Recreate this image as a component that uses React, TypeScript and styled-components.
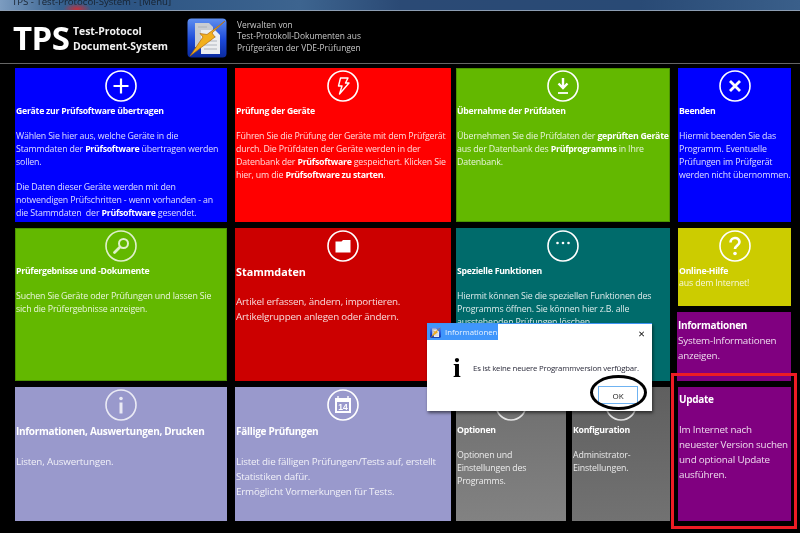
import React from 'react';
import styled, {createGlobalStyle} from "styled-components";

const GlobalStyle = createGlobalStyle`
    html, body {
        margin: 0;
        padding: 0;
        background: #000;
    }
    body {
        width: 800px;
        height: 533px;
        overflow: hidden;
        font-family: "Open Sans", "Noto Sans", "Liberation Sans", sans-serif;
    }
`

const Ring: React.FC<{ children: React.ReactNode, faint?: boolean }> = ({children, faint}) => (
    <svg width="32" height="32" viewBox="0 0 32 32" fill="none" stroke="#fff" opacity={faint ? 0.8 : 1}>
        <circle cx="16" cy="16" r="15" strokeWidth="1.6"/>
        {children}
    </svg>
)

const icons: Record<string, React.ReactNode> = {
    plus: <Ring><path d="M16 8.5v15M8.5 16h15" strokeWidth="2.2"/></Ring>,
    bolt: <Ring><path d="M13.5 8h7.500l-2.500 5h3.500l-9.500 11 2.500-8h-3.500z" strokeWidth="1.4" strokeLinejoin="round"/></Ring>,
    download: <Ring><path d="M16 8v10M11.500 13.500l4.500 4.500 4.500-4.500" strokeWidth="2.4"/><path d="M11 23h10" strokeWidth="1.8"/></Ring>,
    close: <Ring><path d="M11 11l10 10M21 11l-10 10" strokeWidth="2.8"/></Ring>,
    search: <Ring faint><circle cx="18.5" cy="13.5" r="4.5" strokeWidth="2"/><path d="M15 17l-5.500 5.500" strokeWidth="2.8" strokeLinecap="round"/></Ring>,
    folder: <Ring><path d="M8.500 11.500h6l1.500-1.500h7.500v12.500h-15z" fill="#fff" stroke="none"/></Ring>,
    dots: <Ring><g fill="#fff" stroke="none"><circle cx="10.5" cy="13" r="1.3"/><circle cx="16" cy="13" r="1.3"/><circle cx="21.5" cy="13" r="1.3"/></g></Ring>,
    help: <Ring><path d="M11.500 12.500c0-6 9-6 9-.5 0 3.500-4.500 3.500-4.500 7" strokeWidth="2.6"/><circle cx="16" cy="23.5" r="1.8" fill="#fff" stroke="none"/></Ring>,
    info: <Ring faint><circle cx="16" cy="9.5" r="1.8" fill="#fff" stroke="none"/><path d="M16 13.500v11" strokeWidth="3"/></Ring>,
    calendar: (
        <Ring>
            <path d="M8 9h16v15H8z" fill="#fff" stroke="none"/>
            <path d="M10 13h12v9H10z" fill="#9999cc" stroke="none"/>
            <path d="M11 7v3M21 7v3" strokeWidth="1.4"/>
            <text x="16" y="21" fontSize="8.5" fontWeight="700" fill="#fff" stroke="none" textAnchor="middle"
                  fontFamily="Liberation Sans, sans-serif">14</text>
        </Ring>
    ),
    gear: <Ring faint><circle cx="16" cy="16" r="5" strokeWidth="1.6"/></Ring>,
}

const AppLogo: React.FC<{ size: number }> = ({size}) => (
    <svg width={size} height={size} viewBox="0 0 40 40" style={{flex: "none"}}>
        <defs>
            <linearGradient id="logoBg" x1="0" y1="0" x2="0" y2="1">
                <stop offset="0" stopColor="#5f8ff0"/>
                <stop offset="0.55" stopColor="#1c49d8"/>
                <stop offset="1" stopColor="#0a2a9e"/>
            </linearGradient>
        </defs>
        <rect x="0.5" y="0.5" width="39" height="39" rx="4" fill="url(#logoBg)"/>
        <path d="M8 5h14l4 4v20H8z" fill="#c9ccd2"/>
        <path d="M14 12h14l5 5v19H14z" fill="#eceef0"/>
        <path d="M17 19h12M17 23h13M17 27h13M17 31h13M11 9h9" stroke="#a9adb5" strokeWidth="0.9"/>
        <path d="M38 3L25 15l3 4L3 38l13-19-3-3.500 7 1z" fill="#f2b01e" stroke="#b06a10" strokeWidth="0.7"/>
    </svg>
)

const rows = {
    top: "1",
    middle: "3",
    bottom: "5",
}

const columns = {
    first: "1",
    second: "3",
    third: "5",
    fourth: "7",
}

export default function App() {
    return (
        <Screen>
            <GlobalStyle/>
            <TitleBar>
                <TitleIcon><AppLogo size={8}/></TitleIcon>
                <TitleText>TPS - Test-Protocol-System - [Menü]</TitleText>
            </TitleBar>

            <Header>
                <Brand>TPS</Brand>
                <BrandName>Test-Protocol<br/>Document-System</BrandName>
                <HeaderLogo><AppLogo size={40}/></HeaderLogo>
                <HeaderNote>
                    Verwalten von<br/>
                    Test-Protokoll-Dokumenten aus<br/>
                    Prüfgeräten der VDE-Prüfungen
                </HeaderNote>
            </Header>

            <Board>
                <Tile $bg="#0000ff" $col={columns.first} $row={rows.top}>
                    <IconSlot>{icons.plus}</IconSlot>
                    <TileTitle>Geräte zur Prüfsoftware übertragen</TileTitle>
                    <TileBody>
                        Wählen Sie hier aus, welche Geräte in die<br/>
                        Stammdaten der <b>Prüfsoftware</b> übertragen werden<br/>
                        sollen.<br/><br/>
                        Die Daten dieser Geräte werden mit den<br/>
                        notwendigen Prüfschritten - wenn vorhanden - an<br/>
                        die Stammdaten&nbsp; der <b>Prüfsoftware</b> gesendet.
                    </TileBody>
                </Tile>
                <Tile $bg="#ff0000" $col={columns.second} $row={rows.top}>
                    <IconSlot>{icons.bolt}</IconSlot>
                    <TileTitle>Prüfung der Geräte</TileTitle>
                    <TileBody>
                        Führen Sie die Prüfung der Geräte mit dem Prüfgerät<br/>
                        durch. Die Prüfdaten der Geräte werden in der<br/>
                        Datenbank der <b>Prüfsoftware</b> gespeichert. Klicken Sie<br/>
                        hier, um die <b>Prüfsoftware zu starten</b>.
                    </TileBody>
                </Tile>
                <Tile $bg="#63b800" $edge="#4c9400" $col={columns.third} $row={rows.top}>
                    <IconSlot>{icons.download}</IconSlot>
                    <TileTitle>Übernahme der Prüfdaten</TileTitle>
                    <TileBody>
                        Übernehmen Sie die Prüfdaten der <b>geprüften Geräte</b><br/>
                        aus der Datenbank des <b>Prüfprogramms</b> in Ihre<br/>
                        Datenbank.
                    </TileBody>
                </Tile>
                <Tile $bg="#0000ff" $col={columns.fourth} $row={rows.top}>
                    <IconSlot>{icons.close}</IconSlot>
                    <TileTitle>Beenden</TileTitle>
                    <TileBody>
                        Hiermit beenden Sie das<br/>
                        Programm. Eventuelle<br/>
                        Prüfungen im Prüfgerät<br/>
                        werden nicht übernommen.
                    </TileBody>
                </Tile>

                <Tile $bg="#63b800" $edge="#4c9400" $col={columns.first} $row={rows.middle}>
                    <IconSlot>{icons.search}</IconSlot>
                    <TileTitle>Prüfergebnisse und -Dokumente</TileTitle>
                    <TileBody>
                        Suchen Sie Geräte oder Prüfungen und lassen Sie<br/>
                        sich die Prüfergebnisse anzeigen.
                    </TileBody>
                </Tile>
                <Tile $bg="#cc0000" $col={columns.second} $row={rows.middle}>
                    <IconSlot>{icons.folder}</IconSlot>
                    <HeroTitle $large>Stammdaten</HeroTitle>
                    <TileBody $large>
                        Artikel erfassen, ändern, importieren.<br/>
                        Artikelgruppen anlegen oder ändern.
                    </TileBody>
                </Tile>
                <Tile $bg="#006b6b" $col={columns.third} $row={rows.middle}>
                    <IconSlot>{icons.dots}</IconSlot>
                    <TileTitle>Spezielle Funktionen</TileTitle>
                    <TileBody>
                        Hiermit können Sie die speziellen Funktionen des<br/>
                        Programms öffnen. Sie können hier z.B. alle<br/>
                        ausstehenden Prüfungen löschen.
                    </TileBody>
                </Tile>
                <SideStack>
                    <SideTile $bg="#cccc00" $grow={80}>
                        <IconSlot>{icons.help}</IconSlot>
                        <TileTitle>Online-Hilfe</TileTitle>
                        <TileBody $tight>aus dem Internet!</TileBody>
                    </SideTile>
                    <InfoTile $bg="#800080" $grow={67}>
                        <TileTitle $large>Informationen</TileTitle>
                        <TileBody $large $tight>System-Informationen<br/>anzeigen.</TileBody>
                    </InfoTile>
                </SideStack>

                <Tile $bg="#9999cc" $col={columns.first} $row={rows.bottom}>
                    <IconSlot>{icons.info}</IconSlot>
                    <TileTitle $large>Informationen, Auswertungen, Drucken</TileTitle>
                    <TileBody $large>Listen, Auswertungen.</TileBody>
                </Tile>
                <Tile $bg="#9999cc" $col={columns.second} $row={rows.bottom}>
                    <IconSlot>{icons.calendar}</IconSlot>
                    <TileTitle $large>Fällige Prüfungen</TileTitle>
                    <TileBody $large>
                        Listet die fälligen Prüfungen/Tests auf, erstellt<br/>
                        Statistiken dafür.<br/>
                        Ermöglicht Vormerkungen für Tests.
                    </TileBody>
                </Tile>
                <SplitCell>
                    <GrayTile $from="#6e6e6e" $to="#828282">
                        <IconSlot>{icons.gear}</IconSlot>
                        <TileTitle>Optionen</TileTitle>
                        <TileBody>
                            Optionen und<br/>
                            Einstellungen des<br/>
                            Programms.
                        </TileBody>
                    </GrayTile>
                    <GrayTile $from="#5f5f5f" $to="#727272">
                        <IconSlot>{icons.gear}</IconSlot>
                        <TileTitle>Konfiguration</TileTitle>
                        <TileBody>
                            Administrator-<br/>
                            Einstellungen.
                        </TileBody>
                    </GrayTile>
                </SplitCell>
                <UpdateTile $bg="#800080" $col={columns.fourth} $row={rows.bottom}>
                    <TileTitle $large>Update</TileTitle>
                    <TileBody $large>
                        Im Internet nach<br/>
                        neuester Version suchen<br/>
                        und optional Update<br/>
                        ausführen.
                    </TileBody>
                </UpdateTile>
            </Board>

            <Dialog>
                <DialogTab>
                    <AppLogo size={11}/>
                    <DialogTitle>Informationen</DialogTitle>
                </DialogTab>
                <CloseMark>✕</CloseMark>
                <DialogMessage>
                    <InfoGlyph>i</InfoGlyph>
                    <MessageText>Es ist keine neuere Programmversion verfügbar.</MessageText>
                </DialogMessage>
                <OkButton>OK</OkButton>
            </Dialog>
            <OkCircle/>
            <UpdateFrame/>
        </Screen>
    );
}

const Screen = styled.div`
    position: relative;
    width: 800px;
    height: 533px;
    overflow: hidden;
    background: #000;
    filter: blur(0.35px);
`

const TitleBar = styled.div`
    height: 10px;
    display: flex;
    align-items: flex-end;
    overflow: hidden;
    padding-left: 2px;
    gap: 2px;
    border-bottom: 1px solid #8c9db2;
    background:
        radial-gradient(ellipse 14px 6px at 77px 9px, #c0303c 0, rgba(192, 48, 60, 0) 100%),
        linear-gradient(90deg, #7c9cc0 0, #37618f 60px, #2d5584 130px, #3d648f 300px, #2b4a75 400px, #294a75 640px, #3a5f8a 800px);
`

const TitleIcon = styled.span`
    display: block;
    height: 8px;
    flex: none;
`

const TitleText = styled.span`
    font-size: 9.6px;
    line-height: 10px;
    color: #17222f;
    transform: translateY(-3px);
    white-space: nowrap;
`

const Header = styled.header`
    height: 52px;
    display: flex;
    align-items: center;
    padding-left: 13px;
    border-bottom: 1px solid #666;
`

const Brand = styled.div`
    font-family: "Open Sans", sans-serif;
    font-weight: 700;
    font-size: 33px;
    line-height: 33px;
    letter-spacing: -0.6px;
    color: #fff;
    width: 60px;
`

const BrandName = styled.div`
    font-weight: 700;
    font-size: 10.4px;
    line-height: 14.5px;
    color: #f2f2f2;
    width: 114px;
    margin-top: 3px;
    white-space: nowrap;
`

const HeaderLogo = styled.div`
    width: 40px;
    height: 40px;
    margin: 2px 10px 0 0;
`

const HeaderNote = styled.div`
    font-size: 8.4px;
    line-height: 11.5px;
    margin-top: -2px;
    color: #c8c8c8;
    white-space: nowrap;
`

const Board = styled.main`
    display: grid;
    grid-template-columns: 212px 8px 216px 5px 214px 8px 113px;
    grid-template-rows: 154px 6px 153px 6px 134px;
    padding: 4px 0 0 15px;
`

const Tile = styled.section<{ $bg: string, $edge?: string, $col: string, $row: string }>`
    grid-column: ${props => props.$col};
    grid-row: ${props => props.$row};
    background: ${props => props.$bg};
    box-shadow: inset 0 0 0 1px ${props => props.$edge || props.$bg};
    padding: 2px 1px 0;
    color: #fff;
    overflow: hidden;
`

const UpdateTile = styled(Tile)`
    padding-top: 5px;
`

const SideStack = styled.div`
    grid-column: 7;
    grid-row: 3;
    display: flex;
    flex-direction: column;
    gap: 6px;
`

const SideTile = styled.section<{ $bg: string, $grow: number }>`
    flex: ${props => props.$grow} 0 0;
    background: ${props => props.$bg};
    padding: 2px 1px 0;
    color: #fff;
`

const InfoTile = styled(SideTile)`
    padding-top: 6px;
    margin-left: -1px;
`

const SplitCell = styled.div`
    grid-column: 5;
    grid-row: 5;
    display: grid;
    grid-template-columns: 110px 98px;
    gap: 6px;
`

const GrayTile = styled.section<{ $from: string, $to: string }>`
    background: linear-gradient(180deg, ${props => props.$from}, ${props => props.$to});
    padding: 2px 1px 0;
    color: #fff;
`

const IconSlot = styled.div`
    height: 32px;
    display: flex;
    justify-content: center;
    margin-bottom: 2.6px;

    svg {
        display: block;
    }
`

const TileTitle = styled.h3<{ $large?: boolean }>`
    margin: 0;
    font-weight: 700;
    font-size: ${props => props.$large ? "10px" : "8.7px"};
    letter-spacing: ${props => props.$large ? "-0.3px" : "-0.25px"};
    line-height: ${props => props.$large ? "15px" : "12.8px"};
    white-space: nowrap;
`

const HeroTitle = styled(TileTitle)`
    font-size: 10.8px;
    letter-spacing: 0;
    margin-top: -1px;
`

const TileBody = styled.p<{ $large?: boolean, $tight?: boolean }>`
    margin: ${props => props.$tight ? "0" : props.$large ? "15px 0 0" : "12.8px 0 0"};
    font-size: ${props => props.$large ? "9.8px" : "8.8px"};
    letter-spacing: ${props => props.$large ? "-0.18px" : "-0.15px"};
    line-height: ${props => props.$large ? "15px" : "12.8px"};
    color: rgba(255, 255, 255, 0.86);
    white-space: nowrap;

    b {
        color: #fff;
        font-weight: 700;
        letter-spacing: -0.3px;
    }
`

const Dialog = styled.div`
    position: absolute;
    left: 427px;
    top: 323px;
    width: 225px;
    height: 88px;
    background: #fff;
    border-top: 1px solid #3f94f5;
    box-sizing: border-box;
    box-shadow: 1px 2px 3px rgba(0, 0, 0, 0.55);
`

const DialogTab = styled.div`
    width: 71px;
    height: 16px;
    display: flex;
    align-items: center;
    gap: 4px;
    padding-left: 3px;
    box-sizing: border-box;
    background: #4096fb;
`

const DialogTitle = styled.span`
    font-size: 7.8px;
    color: #eaf3ff;
    white-space: nowrap;
`

const CloseMark = styled.span`
    position: absolute;
    right: 7px;
    top: 4px;
    font-family: "DejaVu Sans", sans-serif;
    font-size: 8.5px;
    font-weight: 700;
    line-height: 12px;
    color: #111;
`

const DialogMessage = styled.div`
    display: flex;
    align-items: center;
    height: 30px;
    margin-top: 13px;
    padding-left: 26px;
`

const InfoGlyph = styled.span`
    width: 20px;
    font-family: "Liberation Serif", serif;
    font-weight: 700;
    font-size: 28px;
    line-height: 30px;
    color: #000;
`

const MessageText = styled.span`
    font-size: 7.8px;
    letter-spacing: -0.2px;
    color: #2a2a3a;
    white-space: nowrap;
`

const OkButton = styled.button`
    position: absolute;
    left: 171px;
    top: 62px;
    width: 40px;
    height: 18px;
    padding: 0;
    border: 1px solid #6fb3f2;
    background: #fff;
    font-family: inherit;
    font-size: 8px;
    color: #222;
`

const OkCircle = styled.div`
    position: absolute;
    left: 590px;
    top: 375px;
    width: 57px;
    height: 35px;
    box-sizing: border-box;
    border: 3.5px solid #000;
    border-radius: 50%;
`

const UpdateFrame = styled.div`
    position: absolute;
    left: 671px;
    top: 373px;
    width: 126px;
    height: 156px;
    box-sizing: border-box;
    border: 3px solid #ed1c24;
`
